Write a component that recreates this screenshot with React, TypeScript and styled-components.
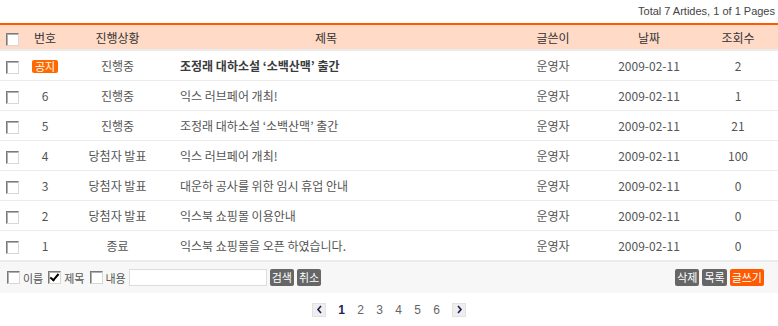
import React from "react";
import styled, { createGlobalStyle } from "styled-components";

interface Post {
  no: string;
  notice?: boolean;
  status: string;
  title: string;
  writer: string;
  date: string;
  hits: number;
}

const posts: Post[] = [
  { no: "공지", notice: true, status: "진행중", title: "조정래 대하소설 ‘소백산맥’ 출간", writer: "운영자", date: "2009-02-11", hits: 2 },
  { no: "6", status: "진행중", title: "익스 러브페어 개최!", writer: "운영자", date: "2009-02-11", hits: 1 },
  { no: "5", status: "진행중", title: "조정래 대하소설 ‘소백산맥’ 출간", writer: "운영자", date: "2009-02-11", hits: 21 },
  { no: "4", status: "당첨자 발표", title: "익스 러브페어 개최!", writer: "운영자", date: "2009-02-11", hits: 100 },
  { no: "3", status: "당첨자 발표", title: "대운하 공사를 위한 임시 휴업 안내", writer: "운영자", date: "2009-02-11", hits: 0 },
  { no: "2", status: "당첨자 발표", title: "익스북 쇼핑몰 이용안내", writer: "운영자", date: "2009-02-11", hits: 0 },
  { no: "1", status: "종료", title: "익스북 쇼핑몰을 오픈 하였습니다.", writer: "운영자", date: "2009-02-11", hits: 0 },
];

const GlobalStyle = createGlobalStyle`
  html, body {
    margin: 0;
    padding: 0;
    background: #fff;
  }
  body {
    font-family: "Noto Sans CJK KR", "Liberation Sans", sans-serif;
    font-size: 12px;
    color: #555;
  }
`;

const App: React.FC = () => {
  return (
    <>
      <GlobalStyle />
      <Board>
        <Summary>Total 7 Artides, 1 of 1 Pages</Summary>
        <Table>
          <colgroup>
            <col style={{ width: 25 }} />
            <col style={{ width: 40 }} />
            <col style={{ width: 105 }} />
            <col style={{ width: 336 }} />
            <col style={{ width: 94 }} />
            <col style={{ width: 98 }} />
            <col style={{ width: 80 }} />
          </colgroup>
          <thead>
            <tr>
              <Th><Check /></Th>
              <Th>번호</Th>
              <Th>진행상황</Th>
              <Th $padRight={24}>제목</Th>
              <Th>글쓴이</Th>
              <Th>날짜</Th>
              <Th>조회수</Th>
            </tr>
          </thead>
          <tbody>
            {posts.map((p, i) => (
              <tr key={i}>
                <Td><Check /></Td>
                <Td>{p.notice ? <NoticeBadge>{p.no}</NoticeBadge> : p.no}</Td>
                <Td>{p.status}</Td>
                <TitleTd $bold={p.notice}>{p.title}</TitleTd>
                <Td>{p.writer}</Td>
                <Td>{p.date}</Td>
                <Td>{p.hits}</Td>
              </tr>
            ))}
          </tbody>
        </Table>

        <SearchBar>
          <SearchGroup>
            <Option><Check />이름</Option>
            <Option><Check $checked />제목</Option>
            <Option><Check />내용</Option>
            <SearchInput />
            <SmallButton>검색</SmallButton>
            <SmallButton>취소</SmallButton>
          </SearchGroup>
          <SearchGroup>
            <SmallButton>삭제</SmallButton>
            <SmallButton>목록</SmallButton>
            <SmallButton $primary>글쓰기</SmallButton>
          </SearchGroup>
        </SearchBar>

        <Pager>
          <PageArrow>
            <svg width="7" height="9" viewBox="0 0 7 9">
              <path d="M5 1 L2 4.5 L5 8" fill="none" stroke="#1e1e4e" strokeWidth="1.6" />
            </svg>
          </PageArrow>
          {[1, 2, 3, 4, 5, 6].map((n) => (
            <PageNum key={n} $active={n === 1}>{n}</PageNum>
          ))}
          <PageArrow>
            <svg width="7" height="9" viewBox="0 0 7 9">
              <path d="M2 1 L5 4.5 L2 8" fill="none" stroke="#1e1e4e" strokeWidth="1.6" />
            </svg>
          </PageArrow>
        </Pager>
      </Board>
    </>
  );
};

export default App;

/* Styled Components */
const Board = styled.div`
  width: 778px;
`;

const Summary = styled.div`
  height: 23px;
  line-height: 23px;
  text-align: right;
  padding-right: 3px;
  font-family: "Liberation Sans", sans-serif;
  font-size: 11px;
  color: #444;
`;

const Table = styled.table`
  width: 778px;
  table-layout: fixed;
  border-collapse: collapse;
  border-top: 2px solid #ff5a00;
`;

const Th = styled.th<{ $padRight?: number }>`
  height: 24px;
  padding: 0 ${(p) => p.$padRight ?? 0}px 0 0;
  background: #ffdac6;
  border-bottom: 2px solid #ebebeb;
  font-weight: normal;
  color: #333;
  text-align: center;
  vertical-align: middle;
`;

const Td = styled.td`
  height: 29px;
  padding: 0;
  border-bottom: 1px solid #ebebeb;
  text-align: center;
  vertical-align: middle;
  color: #555;
  white-space: nowrap;
  tr:last-child & {
    border-bottom: 2px solid #ebebeb;
  }
`;

const TitleTd = styled(Td)<{ $bold?: boolean }>`
  text-align: left;
  padding-left: 10px;
  font-weight: ${(p) => (p.$bold ? "bold" : "normal")};
  color: ${(p) => (p.$bold ? "#3a3a3a" : "#555")};
`;

const Check = styled.span<{ $checked?: boolean }>`
  display: inline-block;
  box-sizing: border-box;
  width: 13px;
  height: 13px;
  vertical-align: middle;
  background: #fff;
  border: 1px solid;
  border-color: #7a7a7a #d8d8d0 #d8d8d0 #7a7a7a;
  box-shadow: inset 1px 1px 0 #b0b0b0;
  position: relative;
  flex-shrink: 0;
  &::after {
    content: "";
    display: ${(p) => (p.$checked ? "block" : "none")};
    position: absolute;
    left: 3px;
    top: 0px;
    width: 3px;
    height: 7px;
    border: solid #000;
    border-width: 0 2px 2px 0;
    transform: rotate(40deg);
  }
`;

const NoticeBadge = styled.span`
  display: inline-block;
  padding: 0 3px;
  height: 13px;
  line-height: 13px;
  font-size: 11px;
  color: #fff;
  background: #ff6a00;
  border-radius: 2px;
`;

const SearchBar = styled.div`
  height: 31px;
  background: #f7f7f7;
  display: flex;
  align-items: center;
  justify-content: space-between;
  padding: 0 14px 0 7px;
`;

const SearchGroup = styled.div`
  display: flex;
  align-items: center;
  gap: 3px;
`;

const Option = styled.label`
  display: flex;
  align-items: center;
  gap: 3px;
  margin-right: 2px;
  font-size: 11px;
  color: #555;
`;

const SearchInput = styled.input`
  box-sizing: border-box;
  width: 138px;
  height: 17px;
  margin: 0 0 0 -2px;
  border: 1px solid #dcdcdc;
  background: #fff;
  padding: 0;
  outline: none;
`;

const SmallButton = styled.button<{ $primary?: boolean }>`
  height: 17px;
  padding: 0 2px;
  border: none;
  border-radius: 2px;
  background: ${(p) => (p.$primary ? "#ff5a00" : "#666")};
  color: #fff;
  font-family: "Noto Sans CJK KR", sans-serif;
  font-size: 11px;
  line-height: 17px;
  cursor: pointer;
`;

const Pager = styled.div`
  display: flex;
  justify-content: center;
  align-items: center;
  height: 33px;
`;

const PageArrow = styled.span`
  display: flex;
  align-items: center;
  justify-content: center;
  box-sizing: border-box;
  width: 14px;
  height: 14px;
  background: #eeeeee;
  border: 1px solid #e2e2e2;
  margin: 0 6px;
`;

const PageNum = styled.span<{ $active?: boolean }>`
  width: 19px;
  text-align: center;
  font-family: "Liberation Sans", sans-serif;
  font-size: 12px;
  font-weight: ${(p) => (p.$active ? "bold" : "normal")};
  color: ${(p) => (p.$active ? "#232352" : "#666")};
`;
